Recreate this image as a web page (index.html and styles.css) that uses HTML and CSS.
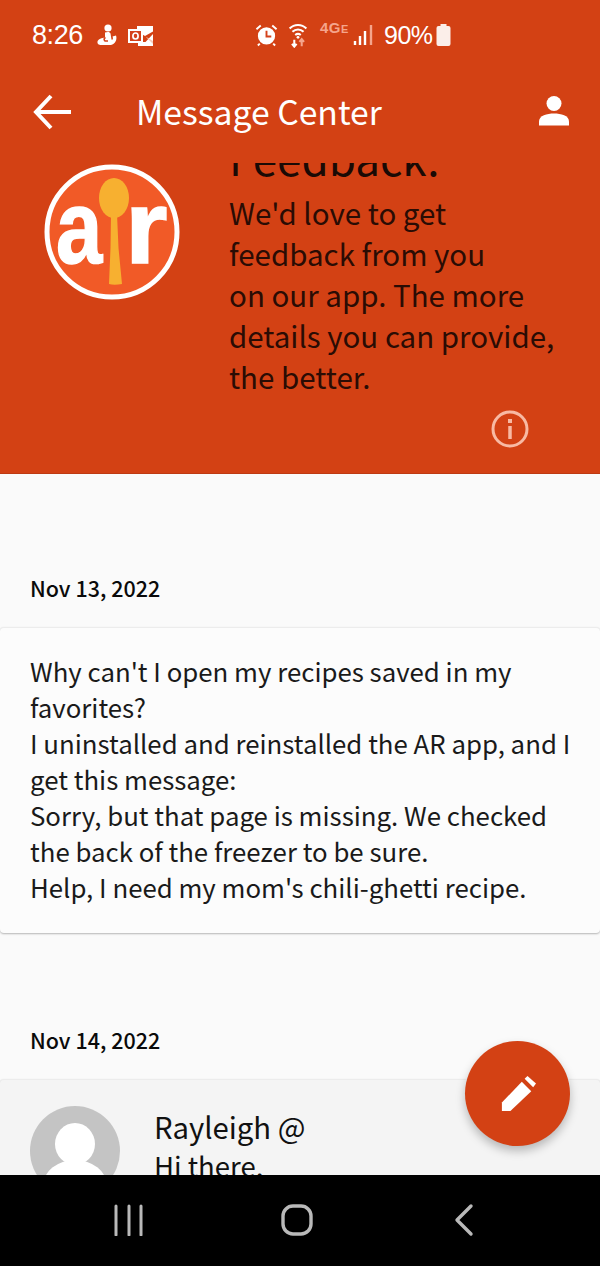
FILE: index.html
```html
<!DOCTYPE html>
<html lang="en">
<head>
<meta charset="utf-8">
<title>Message Center</title>
<link rel="stylesheet" href="styles.css">
</head>
<body>
<div class="screen">
  <header class="top">
    <div class="status">
      <div class="status-left">
        <span class="time">8:26</span>
        <svg class="st-ic baby" width="22" height="24" viewBox="0 0 22 24"><circle cx="12" cy="5" r="3.600" fill="#fff"/><path d="M9 9.500c3-1 5-.5 5.500 1l1 6c2 1 1.500-2 1-3l3.500-1c1.500 4-1 9-5 9.500H5c-2 0-4-1-3.500-3.500C2 16 6 15 9 14.500z" fill="#fff"/><path d="M9.500 14.500q-2.500 1.500-.5 3.500h3" fill="none" stroke="#d4411a" stroke-width="1.600"/></svg>
        <svg class="st-ic mail" width="26" height="20" viewBox="0 0 26 20"><path d="M9 0h16v5.500L17 10 9 5.500z" fill="#fff"/><path d="M25 8v12H10v-4h7.500l7.500-8z" fill="#fff"/><path d="M17.500 10.500 25 15v3z" fill="#f7c9b8"/><rect x="1" y="4" width="13" height="12" fill="#d4411a" stroke="#fff" stroke-width="2"/><ellipse cx="7.500" cy="10" rx="2.600" ry="3" fill="none" stroke="#fff" stroke-width="1.700"/></svg>
      </div>
      <div class="status-right">
        <svg class="alarm" width="23" height="24" viewBox="0 0 24 24"><circle cx="12" cy="13" r="9" fill="#fff"/><path d="M12 7.500V13.500H17" fill="none" stroke="#d4411a" stroke-width="2"/><path d="M1.500 6 6 2M22.500 6 18 2M5 21l-2 2M19 21l2 2" stroke="#fff" stroke-width="2"/></svg>
        <svg class="wifi" width="20" height="26" viewBox="0 0 20 28"><path d="M1 7c5-5 13-5 18 0M4 10.500c3.500-3.200 8.500-3.200 12 0M7 14c2-1.500 4-1.500 6 0" fill="none" stroke="#fff" stroke-width="2.300"/><circle cx="10" cy="16.500" r="1.500" fill="#fff"/><path d="M6 19v7M3.500 23.500 6 26.500l2.500-3" fill="none" stroke="#fff" stroke-width="2.200"/><path d="M14 26v-7M11.500 21.500 14 18.500l2.500 3" fill="none" stroke="#f5a58c" stroke-width="2.200"/></svg>
        <span class="lte">4G<small>E</small></span>
        <svg class="signal" width="20" height="22" viewBox="0 0 20 22"><path d="M2 21v-4M7 21v-9M12 21V7" stroke="#fff" stroke-width="2.400"/><path d="M18 21V1" stroke="#f5a58c" stroke-width="2.400"/></svg>
        <span class="batt-text">90%</span>
        <svg class="batt" width="15" height="24" viewBox="0 0 14 24"><path d="M4 1h6v2h2a2 2 0 0 1 2 2v16a2 2 0 0 1-2 2H2a2 2 0 0 1-2-2V5a2 2 0 0 1 2-2h2z" fill="#fbeee9"/></svg>
      </div>
    </div>
    <div class="appbar">
      <svg class="back" width="40" height="38" viewBox="0 0 40 38"><path d="M38 19H3M18 3 3 19 18 35" fill="none" stroke="#fff" stroke-width="4"/></svg>
      <h1 class="title">Message Center</h1>
      <svg class="person" width="32" height="33" viewBox="0 0 32 32"><circle cx="16" cy="9" r="7.500" fill="#fff"/><path d="M1 31v-4c0-6 8-8 15-8s15 2 15 8v4z" fill="#fff"/></svg>
    </div>
    <div class="hero">
      <svg class="logo" width="136" height="136" viewBox="0 0 136 136">
        <circle cx="68" cy="68" r="65" fill="#f15a27" stroke="#fff" stroke-width="5"/>
        <text class="logo-a" x="0" y="0" transform="translate(12 99) scale(.8 1)">a</text>
        <text class="logo-r" x="0" y="0" transform="translate(81 99) scale(1.05 1)">r</text>
        <ellipse cx="70" cy="34" rx="15" ry="20" fill="#f7b030"/>
        <path d="M67 50h6l1.500 34 3.500 36q-8 1.500-13 0l1.500-36z" fill="#f7b030"/>
      </svg>
      <div class="hero-copy">
        <h2 class="hero-title">Feedback:</h2>
        <p class="hero-text">We'd love to get<br>feedback from you<br>on our app. The more<br>details you can provide,<br>the better.</p>
      </div>
      <svg class="info" width="38" height="38" viewBox="0 0 38 38"><circle cx="19" cy="19" r="17" fill="none" stroke="#f8b9a3" stroke-width="3"/><path d="M19 16v13" stroke="#f8b9a3" stroke-width="3.500"/><rect x="17" y="9" width="4" height="4" fill="#f8b9a3"/></svg>
    </div>
  </header>

  <main class="content">
    <div class="date first">Nov 13, 2022</div>
    <article class="card">
      <p>Why can't I open my recipes saved in my favorites?<br>I uninstalled and reinstalled the AR app, and I get this message:<br>Sorry, but that page is missing. We checked the back of the freezer to be sure.<br>Help, I need my mom's chili-ghetti recipe.</p>
    </article>
    <div class="date second">Nov 14, 2022</div>
    <article class="card reply">
      <svg class="avatar" width="90" height="90" viewBox="0 0 90 90"><circle cx="45" cy="45" r="45" fill="#c4c4c4"/><ellipse cx="45" cy="38" rx="20" ry="21" fill="#fff"/><ellipse cx="45" cy="80" rx="32" ry="26" fill="#fff"/></svg>
      <div class="reply-body">
        <div class="name">Rayleigh @</div>
        <div class="msg">Hi there,</div>
      </div>
    </article>
  </main>

  <nav class="navbar">
    <svg width="32" height="32" viewBox="0 0 32 32"><path d="M3 2v29M16 2v29M28 2v29" stroke="#b9b9b9" stroke-width="3" stroke-linecap="round"/></svg>
    <svg width="34" height="34" viewBox="0 0 34 34"><rect x="3" y="3" width="28" height="28" rx="10" fill="none" stroke="#b9b9b9" stroke-width="3.400"/></svg>
    <svg width="22" height="34" viewBox="0 0 22 34"><path d="M18 3 4 17l14 14" fill="none" stroke="#b9b9b9" stroke-width="3.400" stroke-linecap="round" stroke-linejoin="round"/></svg>
  </nav>

  <button class="fab" type="button" aria-label="Compose">
    <svg width="36" height="36" viewBox="0 0 38 38"><path d="M2 37v-9L23 6l10 10-22 21z" fill="#fff"/><path d="M26 3l3-3 9 8-3 4z" fill="#fff"/></svg>
  </button>
</div>
</body>
</html>
```

FILE: styles.css
```css
* { box-sizing: border-box; }
html, body { margin: 0; padding: 0; }
body {
  width: 600px;
  height: 1266px;
  overflow: hidden;
  font-family: "Noto Sans CJK SC", "Noto Sans", sans-serif;
  color: #111;
}
.screen {
  position: relative;
  width: 600px;
  height: 1266px;
  display: flex;
  flex-direction: column;
  background: #fafafa;
  overflow: hidden;
}
.top {
  height: 474px;
  flex: none;
  background: #d34114;
  border-bottom: 1px solid #bd3a12;
  display: flex;
  flex-direction: column;
}
.status {
  height: 74px;
  flex: none;
  padding: 20px 0 0 32px;
  display: flex;
  color: #fff;
}
.status-left { display: flex; align-items: center; height: 30px; width: 223px; }
.time { font-family: "Liberation Sans", sans-serif; font-size: 27px; width: 64px; letter-spacing: -.4px; }
.baby { margin-right: 10px; }
.mail { margin-top: 2px; }
.status-right { display: flex; align-items: center; height: 30px; }
.alarm { margin-right: 10px; }
.wifi { margin-right: 12px; }
.lte { font-family: "Liberation Sans", sans-serif; font-size: 15px; color: #f5a58c; width: 33px; margin: -14px 0 0 0; font-weight: 700; line-height: 14px; letter-spacing: .5px; }
.lte small { font-size: 11px; }
.signal { margin-right: 11px; }
.batt-text { font-family: "Liberation Sans", sans-serif; font-size: 25px; letter-spacing: -.5px; width: 50px; }
.batt { margin-left: 2px; }

.appbar {
  height: 89px;
  flex: none;
  display: flex;
  align-items: center;
  padding: 0 30px 13px 33px;
  background: #d34114;
}
.back { flex: none; }
.title {
  margin: 0 0 0 63px;
  flex: 1;
  font-size: 33.700px;
  font-weight: 400;
  color: #fff;
  line-height: 1;
  position: relative;
  top: -1px;
}
.person { flex: none; margin-top: -4px; }

.hero {
  position: relative;
  flex: 1;
  overflow: hidden;
  display: flex;
  align-items: flex-start;
  padding-left: 44px;
}
.logo { flex: none; margin-top: 1px; }
.logo-a, .logo-r { font-family: "Liberation Sans", sans-serif; font-weight: 700; font-size: 104px; fill: #fff; stroke: #fff; stroke-width: 1.500px; }
.hero-copy { margin: -26px 0 0 49px; }
.hero-title { margin: 0; font-size: 44px; font-weight: 400; line-height: 40px; color: #1a0a05; height: 40px; }
.hero-text { margin: 15px 0 0; font-size: 29.500px; line-height: 41px; color: #2a0c04; }
.info { position: absolute; left: 491px; top: 247px; }

.content { flex: 1; min-height: 0; overflow: hidden; }
.date { font-size: 21.500px; line-height: 30px; color: #0a0a0a; padding-left: 30px; font-weight: 500; }
.date.first { padding-top: 99px; }
.date.second { padding-top: 92px; }
.card {
  background: #fcfcfc;
  border-radius: 4px;
  border-top: 1px solid #ececec;
  box-shadow: 0 1px 2px rgba(0,0,0,.28);
}
.date + .card { margin-top: 24px; }
.card p { margin: 0; padding: 25px 20px 26px 30px; font-size: 25.800px; line-height: 36px; color: #1a1a1a; height: 305px; }
.reply { background: #f4f4f4; display: flex; padding: 26px 0 0 30px; height: 140px; overflow: hidden; }
.avatar { flex: none; }
.reply-body { margin-left: 34px; margin-top: -1px; }
.name { font-size: 29.300px; line-height: 42px; color: #111; }
.msg { font-size: 27.500px; line-height: 36px; color: #111; }

.navbar {
  height: 91px;
  flex: none;
  background: #000;
  display: flex;
  align-items: center;
  justify-content: space-between;
  padding: 0 125px 2px 113px;
}
.navbar svg:nth-child(2) { margin-left: -4px; }
.fab {
  position: absolute;
  left: 465px;
  top: 1041px;
  width: 105px;
  height: 105px;
  border: 0;
  border-radius: 50%;
  background: #d34114;
  box-shadow: 0 5px 10px rgba(0,0,0,.25);
  display: flex;
  align-items: center;
  justify-content: center;
  padding: 0;
}
```
